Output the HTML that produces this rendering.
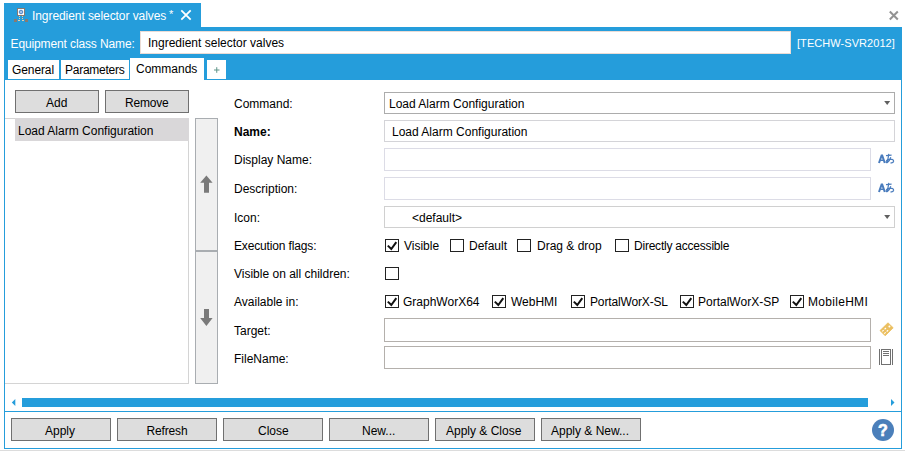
<!DOCTYPE html>
<html><head><meta charset="utf-8">
<style>
*{box-sizing:border-box;margin:0;padding:0}
html,body{width:905px;height:453px;overflow:hidden;background:#fff}
body{position:relative;font-family:"Liberation Sans",sans-serif;font-size:12px;color:#000}
.a{position:absolute}
.t{position:absolute;line-height:16px;white-space:pre}
.blue{background:#259ddb}
.btn{position:absolute;background:#dddddd;border:1px solid #707070}
.tb{position:absolute;background:#fff;border:1px solid #d9d9e0}
.cb{position:absolute;width:14px;height:13px;border:1px solid #222;background:#fff}
.cb svg{position:absolute;left:1px;top:1px}
.w{color:#fff}
</style></head><body>

<!-- title tab -->
<div class="a blue" style="left:4px;top:3px;width:197px;height:25px"></div>
<svg class="a" style="left:13px;top:7px" width="16" height="16" viewBox="0 0 16 16">
  <rect x="4.5" y="1.5" width="7" height="7" fill="#fff" stroke="#877a72" stroke-width="1"/>
  <circle cx="8" cy="5" r="1.8" fill="#a8c4e8" stroke="#4f86c8" stroke-width="1"/>
  <rect x="1" y="12" width="3" height="3" fill="#877a72"/>
  <rect x="12" y="12" width="3" height="3" fill="#877a72"/>
  <rect x="6" y="9" width="1" height="1" fill="#e6cfa8"/>
  <rect x="9" y="9" width="1" height="1" fill="#e6cfa8"/>
  <rect x="6" y="11" width="1" height="1" fill="#e6cfa8"/>
  <rect x="9" y="11" width="1" height="1" fill="#e6cfa8"/>
  <rect x="5" y="13" width="2" height="1" fill="#e6cfa8"/>
  <rect x="9" y="13" width="2" height="1" fill="#e6cfa8"/>
</svg>
<div class="t w" style="left:32px;top:8px;letter-spacing:-0.07px">Ingredient selector valves</div><div class="t w" style="left:169px;top:6px;font-size:11px">*</div>
<svg class="a" style="left:180px;top:9px" width="12" height="12" viewBox="0 0 12 12">
  <path d="M1.3 1.3 L10.7 10.7 M10.7 1.3 L1.3 10.7" stroke="#fff" stroke-width="1.8"/>
</svg>
<!-- window close -->
<svg class="a" style="left:888px;top:9.5px" width="11" height="11" viewBox="0 0 11 11">
  <path d="M1.8 1.5 L9.8 9.5 M9.8 1.5 L1.8 9.5" stroke="#939393" stroke-width="2"/>
</svg>

<!-- header band -->
<div class="a blue" style="left:4px;top:27px;width:898px;height:53px"></div>
<div class="t w" style="left:10.5px;top:36px;letter-spacing:-0.12px">Equipment class Name:</div>
<div class="a" style="left:140px;top:31px;width:651px;height:23px;background:#fff;border:1px solid #eadcd6"></div>
<div class="t" style="left:148px;top:35px">Ingredient selector valves</div>
<div class="t w" style="left:797px;top:35px;font-size:11px;letter-spacing:0.06px">[TECHW-SVR2012]</div>

<!-- tabs -->
<div class="a" style="left:8px;top:60px;width:51px;height:19px;background:#fff"></div>
<div class="t" style="left:12px;top:62px;letter-spacing:-0.1px">General</div>
<div class="a" style="left:61px;top:60px;width:68px;height:19px;background:#fff"></div>
<div class="t" style="left:65px;top:62px;letter-spacing:-0.25px">Parameters</div>
<div class="a" style="left:130px;top:58px;width:74px;height:22px;background:#fff"></div>
<div class="t" style="left:136px;top:61px">Commands</div>
<div class="a" style="left:207px;top:60px;width:19px;height:19px;background:#fff"></div>
<svg class="a" style="left:214px;top:67px" width="6" height="6" viewBox="0 0 6 6"><path d="M0 3 H5.5 M2.75 0.2 V5.8" stroke="#5f9488" stroke-width="1"/></svg>

<!-- main content frame -->
<div class="a" style="left:4px;top:80px;width:898px;height:369px;border:1px solid #259ddb;border-top:none;background:#fff"></div>

<!-- left panel -->
<div class="btn" style="left:15px;top:90px;width:84px;height:23px"></div>
<div class="t" style="left:46px;top:95px">Add</div>
<div class="btn" style="left:105px;top:90px;width:84px;height:23px"></div>
<div class="t" style="left:125px;top:95px;letter-spacing:-0.22px">Remove</div>

<div class="a" style="left:5px;top:118px;width:184px;height:266px;border:1px solid #d4d4d4;border-left:none;background:#fff"></div>
<div class="a" style="left:15px;top:118px;width:174px;height:23px;background:#d9d7d9"></div>
<div class="t" style="left:18px;top:123px">Load Alarm Configuration</div>

<div class="a" style="left:195px;top:118px;width:23px;height:266px;background:#f0f0f0;border:1px solid #a9adb1"></div>
<div class="a" style="left:196px;top:250px;width:21px;height:2px;background:#a9adb1"></div>
<svg class="a" style="left:199px;top:175px" width="15" height="19" viewBox="0 0 15 19">
  <path d="M7.4 0.6 L13.6 7.8 L10 7.8 L10 17.8 L5 17.8 L5 7.8 L1.2 7.8 Z" fill="#7a7a7a"/>
</svg>
<svg class="a" style="left:199px;top:308px" width="15" height="19" viewBox="0 0 15 19">
  <path d="M7.4 18 L13.6 10 L10 10 L10 1 L5 1 L5 10 L1.2 10 Z" fill="#7a7a7a"/>
</svg>

<!-- form labels -->
<div class="t" style="left:234px;top:96px">Command:</div>
<div class="t" style="left:234px;top:124px;font-weight:bold">Name:</div>
<div class="t" style="left:234px;top:152px">Display Name:</div>
<div class="t" style="left:234px;top:181px">Description:</div>
<div class="t" style="left:234px;top:210px">Icon:</div>
<div class="t" style="left:234px;top:238px;letter-spacing:-0.15px">Execution flags:</div>
<div class="t" style="left:234px;top:266px">Visible on all children:</div>
<div class="t" style="left:234px;top:294px">Available in:</div>
<div class="t" style="left:234px;top:323px">Target:</div>
<div class="t" style="left:234px;top:351px">FileName:</div>

<!-- form fields -->
<div class="tb" style="left:384px;top:92px;width:511px;height:22px;border-color:#acacac"></div>
<div class="t" style="left:389px;top:96px">Load Alarm Configuration</div>
<svg class="a" style="left:884px;top:101px" width="7" height="5" viewBox="0 0 7 5"><path d="M0.2 0 H6.2 L3.2 4 Z" fill="#606060"/></svg>

<div class="tb" style="left:384px;top:120px;width:511px;height:22px;border-color:#d4d4d8"></div>
<div class="t" style="left:392px;top:124px">Load Alarm Configuration</div>

<div class="tb" style="left:384px;top:148px;width:487px;height:23px;border-color:#dcdce6"></div>
<svg class="a" style="left:877px;top:153px" width="18" height="11" viewBox="0 0 18 11"><g fill="none" stroke="#4a7cbd"><path d="M2 10 L4.6 2.4 L5.2 2.4 L7.8 10" stroke-width="2"/><path d="M3.2 7.3 H6.6" stroke-width="1.4"/><path d="M9 2.6 L14.6 2.2" stroke-width="1.2"/><path d="M11.8 0.8 Q11.2 5 10.2 9.2" stroke-width="1.2"/><path d="M13.8 4.2 Q12.6 7.8 10.4 9.4 Q9 10.2 9.2 8.4 Q10 6.2 13.4 6.1 Q16.8 6.2 16.6 8.4 Q16.2 10 13.4 10" stroke-width="1.2"/></g></svg>
<div class="tb" style="left:384px;top:177px;width:487px;height:23px;border-color:#dcdce6"></div>
<svg class="a" style="left:877px;top:182px" width="18" height="11" viewBox="0 0 18 11"><g fill="none" stroke="#4a7cbd"><path d="M2 10 L4.6 2.4 L5.2 2.4 L7.8 10" stroke-width="2"/><path d="M3.2 7.3 H6.6" stroke-width="1.4"/><path d="M9 2.6 L14.6 2.2" stroke-width="1.2"/><path d="M11.8 0.8 Q11.2 5 10.2 9.2" stroke-width="1.2"/><path d="M13.8 4.2 Q12.6 7.8 10.4 9.4 Q9 10.2 9.2 8.4 Q10 6.2 13.4 6.1 Q16.8 6.2 16.6 8.4 Q16.2 10 13.4 10" stroke-width="1.2"/></g></svg>

<div class="tb" style="left:384px;top:206px;width:511px;height:22px;border-color:#d0d0d0"></div>
<div class="t" style="left:412px;top:210px">&lt;default&gt;</div>
<svg class="a" style="left:884px;top:215px" width="7" height="5" viewBox="0 0 7 5"><path d="M0.2 0 H6.2 L3.2 4 Z" fill="#606060"/></svg>

<!-- checkboxes row exec flags -->
<div class="cb" style="left:385px;top:239px"><svg width="12" height="11" viewBox="0 0 12 11"><path d="M0.8 4.6 L4.3 8 L9.3 1.2" fill="none" stroke="#111" stroke-width="2"/></svg></div>
<div class="t" style="left:404px;top:238px">Visible</div>
<div class="cb" style="left:450px;top:239px"></div>
<div class="t" style="left:469px;top:238px">Default</div>
<div class="cb" style="left:517px;top:239px"></div>
<div class="t" style="left:537px;top:238px">Drag &amp; drop</div>
<div class="cb" style="left:615px;top:239px"></div>
<div class="t" style="left:634px;top:238px;letter-spacing:-0.22px">Directly accessible</div>

<div class="cb" style="left:385px;top:267px"></div>

<div class="cb" style="left:385px;top:295px"><svg width="12" height="11" viewBox="0 0 12 11"><path d="M0.8 4.6 L4.3 8 L9.3 1.2" fill="none" stroke="#111" stroke-width="2"/></svg></div>
<div class="t" style="left:403px;top:294px">GraphWorX64</div>
<div class="cb" style="left:492px;top:295px"><svg width="12" height="11" viewBox="0 0 12 11"><path d="M0.8 4.6 L4.3 8 L9.3 1.2" fill="none" stroke="#111" stroke-width="2"/></svg></div>
<div class="t" style="left:511px;top:294px">WebHMI</div>
<div class="cb" style="left:571px;top:295px"><svg width="12" height="11" viewBox="0 0 12 11"><path d="M0.8 4.6 L4.3 8 L9.3 1.2" fill="none" stroke="#111" stroke-width="2"/></svg></div>
<div class="t" style="left:590px;top:294px;letter-spacing:-0.15px">PortalWorX-SL</div>
<div class="cb" style="left:680px;top:295px"><svg width="12" height="11" viewBox="0 0 12 11"><path d="M0.8 4.6 L4.3 8 L9.3 1.2" fill="none" stroke="#111" stroke-width="2"/></svg></div>
<div class="t" style="left:698px;top:294px">PortalWorX-SP</div>
<div class="cb" style="left:790px;top:295px"><svg width="12" height="11" viewBox="0 0 12 11"><path d="M0.8 4.6 L4.3 8 L9.3 1.2" fill="none" stroke="#111" stroke-width="2"/></svg></div>
<div class="t" style="left:808px;top:294px;letter-spacing:0.3px">MobileHMI</div>

<div class="tb" style="left:384px;top:318px;width:487px;height:24px;border-color:#b4b0ac"></div>
<svg class="a" style="left:878px;top:321px" width="17" height="17" viewBox="0 0 17 17">
  <path d="M10 1.8 L15.2 6.8 L7.2 14.8 L2 9.6 Z" fill="#ebbf60" stroke="#ebbf60" stroke-width="0.8" stroke-linejoin="round"/>
  <circle cx="11.4" cy="5.4" r="1" fill="#fff"/>
  <path d="M4.2 10.4 L8 7 M6.2 12.6 L10.2 9.2" stroke="#fff" stroke-width="1.1" stroke-dasharray="2 1.2"/>
</svg>
<div class="tb" style="left:384px;top:346px;width:487px;height:23px;border-color:#b4b0ac"></div>
<svg class="a" style="left:878px;top:348px" width="16" height="18" viewBox="0 0 16 18">
  <path d="M1.5 1 V17 M14.5 1 V17" stroke="#707070" stroke-width="1"/>
  <rect x="3.5" y="1.5" width="9" height="15" fill="none" stroke="#707070" stroke-width="1"/>
  <path d="M5 3.5 H11 M5 5.5 H11 M5 7.5 H11" stroke="#707070" stroke-width="1"/>
</svg>

<!-- horizontal scrollbar -->
<svg class="a" style="left:11px;top:399px" width="5" height="7" viewBox="0 0 5 7"><path d="M4.3 0 V7 L0.8 3.5 Z" fill="#259ddb"/></svg>
<div class="a blue" style="left:22px;top:398px;width:846px;height:9px"></div>
<svg class="a" style="left:891px;top:399px" width="5" height="7" viewBox="0 0 5 7"><path d="M0 0 V7 L3.5 3.5 Z" fill="#259ddb"/></svg>
<div class="a blue" style="left:5px;top:411px;width:896px;height:1px"></div>

<!-- bottom buttons -->
<div class="btn" style="left:11px;top:418px;width:100px;height:23px"></div>
<div class="t" style="left:45px;top:423px">Apply</div>
<div class="btn" style="left:117px;top:418px;width:100px;height:23px"></div>
<div class="t" style="left:146.5px;top:423px;letter-spacing:-0.15px">Refresh</div>
<div class="btn" style="left:223px;top:418px;width:100px;height:23px"></div>
<div class="t" style="left:258px;top:423px">Close</div>
<div class="btn" style="left:329px;top:418px;width:100px;height:23px"></div>
<div class="t" style="left:362px;top:423px">New...</div>
<div class="btn" style="left:435px;top:418px;width:100px;height:23px"></div>
<div class="t" style="left:446px;top:423px">Apply &amp; Close</div>
<div class="btn" style="left:541px;top:418px;width:100px;height:23px"></div>
<div class="t" style="left:551px;top:423px">Apply &amp; New...</div>

<svg class="a" style="left:872px;top:419px" width="22" height="22" viewBox="0 0 22 22">
  <circle cx="11" cy="11" r="11" fill="#4b7fba"/>
  <text x="11" y="17" text-anchor="middle" fill="#fff" stroke="#fff" stroke-width="0.6" font-family="Liberation Sans" font-weight="bold" font-size="16">?</text>
</svg>

<div class="a" style="left:0;top:450px;width:905px;height:1px;background:#dcdcdc"></div>

</body></html>
